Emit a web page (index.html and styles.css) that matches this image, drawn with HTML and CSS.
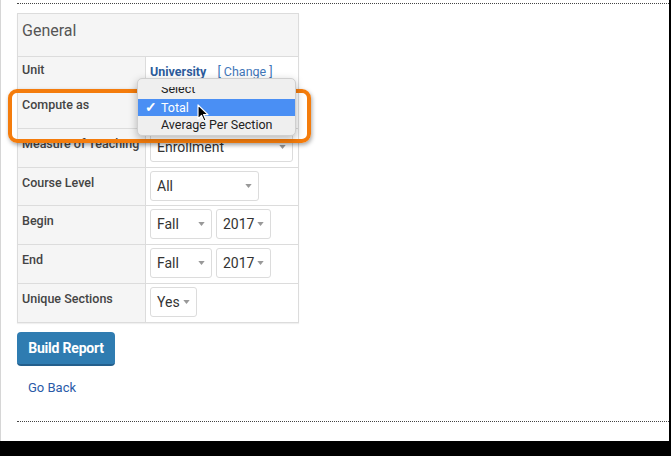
FILE: index.html
```html
<!DOCTYPE html>
<html>
<head>
<meta charset="utf-8">
<link rel="stylesheet" href="styles.css">
</head>
<body>
<div class="page">
  <div class="content">
    <div class="rule"></div>
    <div class="form">
      <div class="head">General</div>
      <div class="lbl lbl-unit">Unit</div>
      <div class="val val-unit"><span class="unit-name">University</span><span class="change">[ Change ]</span></div>

      <div class="lbl">Compute as</div>
      <div class="val"><div class="sel w-enroll"><span>Total</span><svg class="arr" width="7" height="4" viewBox="0 0 8 5"><path d="M0 0H8L4 5Z"/></svg></div></div>

      <div class="lbl">Measure of Teaching</div>
      <div class="val"><div class="sel w-enroll"><span>Enrollment</span><svg class="arr" width="7" height="4" viewBox="0 0 8 5"><path d="M0 0H8L4 5Z"/></svg></div></div>

      <div class="lbl">Course Level</div>
      <div class="val"><div class="sel w-all"><span>All</span><svg class="arr" width="7" height="4" viewBox="0 0 8 5"><path d="M0 0H8L4 5Z"/></svg></div></div>

      <div class="lbl">Begin</div>
      <div class="val"><div class="sel w-term"><span>Fall</span><svg class="arr" width="7" height="4" viewBox="0 0 8 5"><path d="M0 0H8L4 5Z"/></svg></div><div class="sel w-year"><span>2017</span><svg class="arr" width="7" height="4" viewBox="0 0 8 5"><path d="M0 0H8L4 5Z"/></svg></div></div>

      <div class="lbl">End</div>
      <div class="val"><div class="sel w-term"><span>Fall</span><svg class="arr" width="7" height="4" viewBox="0 0 8 5"><path d="M0 0H8L4 5Z"/></svg></div><div class="sel w-year"><span>2017</span><svg class="arr" width="7" height="4" viewBox="0 0 8 5"><path d="M0 0H8L4 5Z"/></svg></div></div>

      <div class="lbl lbl-last">Unique Sections</div>
      <div class="val val-last"><div class="sel w-yes"><span>Yes</span><svg class="arr" width="7" height="4" viewBox="0 0 8 5"><path d="M0 0H8L4 5Z"/></svg></div></div>
    </div>
    <button class="btn">Build Report</button>
    <a class="back">Go Back</a>
    <div class="rule rule-bottom"></div>
  </div>

  <div class="highlight"></div>
  <div class="menu">
    <div class="menu-view">
      <div class="item item-clipped">Select</div>
      <div class="item item-on"><span class="check">✓</span>Total</div>
      <div class="item">Average Per Section</div>
    </div>
  </div>
  <svg class="cursor" width="12" height="18" viewBox="0 0 12 18"><path d="M1 1 L1 15 L4.5 11.5 L7 17 L9 16 L6.6 10.6 L11 10.6 Z" fill="#000" stroke="#fff" stroke-width="1.2" stroke-linejoin="round"/></svg>
</div>
</body>
</html>
```

FILE: styles.css
```css
html, body {
  margin: 0;
  padding: 0;
  background: #000;
}
body {
  font-family: Roboto, "Liberation Sans", sans-serif;
  color: #333;
}
.page {
  position: relative;
  width: 669px;
  height: 441px;
  box-sizing: border-box;
  background: #fff;
  border-left: 1px solid #d6d6d6;
}
.content {
  padding: 3px 0 0 16px;
  display: flex;
  flex-direction: column;
  align-items: flex-start;
}
.rule {
  align-self: stretch;
  border-top: 1px dotted #444;
}
.rule-bottom {
  margin-top: 24px;
}
.form {
  margin-top: 9px;
  width: 282px;
  box-sizing: border-box;
  border: 1px solid #dcdcdc;
  display: grid;
  grid-template-columns: 128px 152px;
  grid-template-rows: 43px 33px 39px 39px 38px 39px 39px 38px;
  background: #fff;
  box-shadow: 0 1px 1px rgba(0,0,0,0.06);
}
.head {
  grid-column: 1 / 3;
  box-sizing: border-box;
  background: #f5f5f5;
  border-bottom: 1px solid #dcdcdc;
  padding: 7px 0 0 4px;
  font-size: 16px;
  line-height: 20px;
  color: #555;
}
.lbl {
  box-sizing: border-box;
  background: #f5f5f5;
  border-right: 1px solid #dcdcdc;
  border-bottom: 1px solid #dcdcdc;
  padding: 7px 0 0 4px;
  font-size: 12.5px;
  line-height: 16px;
  font-weight: 500;
  color: #444;
  white-space: nowrap;
}
.val {
  box-sizing: border-box;
  border-bottom: 1px solid #dcdcdc;
  padding: 3px 0 0 4px;
  display: flex;
  gap: 4px;
  align-items: flex-start;
}
.lbl-unit {
  padding-top: 5px;
}
.val-unit {
  padding-top: 7px;
  font-size: 12.5px;
  line-height: 16px;
}
.lbl-last, .val-last {
  border-bottom: none;
}
.unit-name {
  font-weight: 700;
  color: #2d5c9c;
}
.change {
  margin-left: 7px;
  color: #3f76b8;
}
.sel {
  height: 30px;
  box-sizing: border-box;
  border: 1px solid #dcdcdc;
  border-radius: 3px;
  background: #fff;
  display: flex;
  align-items: center;
  justify-content: space-between;
  padding: 0 6px 0 6px;
  font-size: 14px;
  color: #333;
}
.arr {
  fill: #999;
  margin-top: -1px;
}
.w-enroll { width: 143px; }
.w-all { width: 109px; }
.w-term { width: 62px; }
.w-year { width: 55px; }
.w-yes { width: 47px; }
.btn {
  margin-top: 9px;
  width: 98px;
  height: 34px;
  border: none;
  border-bottom: 2px solid #245f8c;
  border-radius: 4px;
  background: #2f7cb1;
  color: #fff;
  font-family: Roboto, "Liberation Sans", sans-serif;
  font-weight: 700;
  font-size: 14px;
  padding: 0;
  letter-spacing: -0.2px;
}
.back {
  margin: 13px 0 0 11px;
  font-size: 13px;
  line-height: 18px;
  color: #2a5aa8;
}
.highlight {
  position: absolute;
  left: 7px;
  top: 89px;
  width: 303px;
  height: 54px;
  box-sizing: border-box;
  border: 4px solid #f47c0c;
  border-radius: 9px;
  box-shadow: 1px 2px 4px rgba(0,0,0,0.35);
}
.menu {
  position: absolute;
  left: 136px;
  top: 78px;
  width: 159px;
  height: 58px;
  box-sizing: border-box;
  background: #efefef;
  border: 1px solid #cfcfcf;
  border-radius: 5px;
  box-shadow: 0 3px 8px rgba(0,0,0,0.28);
  padding-top: 8px;
  font-family: Roboto, "Liberation Sans", sans-serif;
  font-size: 12.5px;
  color: #222;
}
.menu-view {
  overflow: hidden;
  height: 46px;
}
.item {
  height: 17px;
  line-height: 17px;
  padding-left: 23px;
  position: relative;
  white-space: nowrap;
}
.item-clipped {
  margin-top: -6px;
  height: 18px;
  line-height: 15px;
}
.item-on {
  background: #4a8ff4;
  color: #fff;
}
.check {
  position: absolute;
  left: 7px;
  top: 0;
  font-size: 14px;
  font-weight: 700;
}
.cursor {
  position: absolute;
  left: 196px;
  top: 104px;
}
```
